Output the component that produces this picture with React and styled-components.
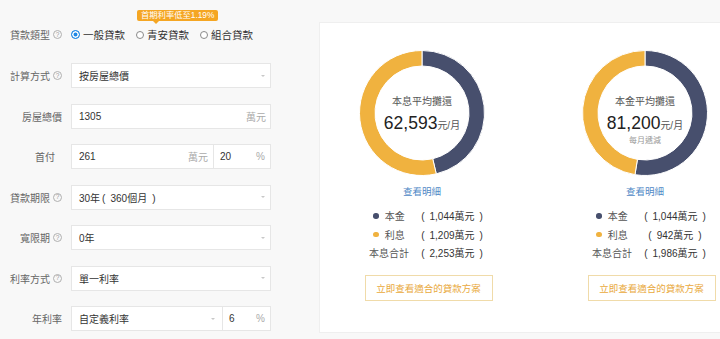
import React from "react";
import styled, { createGlobalStyle } from "styled-components";

const NAVY = "#474f6d";
const GOLD = "#f0b23f";

const GlobalStyle = createGlobalStyle`
  html, body { margin: 0; padding: 0; background: #f8f8f8; }
  body {
    width: 720px; height: 339px; overflow: hidden;
    font-family: "Liberation Sans", "Noto Sans CJK TC", sans-serif;
    color: #333;
  }
  * { box-sizing: border-box; }
`;

const Page = styled.div`
  display: flex;
  align-items: flex-start;
  gap: 48px;
`;

const Form = styled.div`
  width: 271px;
  flex-shrink: 0;
  padding-top: 21.8px;
  display: flex;
  flex-direction: column;
  gap: 15.5px;
`;

const Row = styled.div`
  display: grid;
  grid-template-columns: 62px 200px;
  column-gap: 9px;
  align-items: center;
  height: ${(p) => p.$h || 25}px;
`;

const Label = styled.div`
  display: flex;
  justify-content: flex-end;
  align-items: center;
  gap: 3px;
  font-size: 10px;
  color: #666;
  white-space: nowrap;
  padding-right: ${(p) => p.$pr || 0}px;
`;

const Help = styled.span`
  width: 9px;
  height: 9px;
  border: 1px solid #b0b0b0;
  border-radius: 50%;
  font-size: 6.5px;
  color: #999;
  display: inline-flex;
  align-items: center;
  justify-content: center;
  line-height: 1;
`;

const RadioRow = styled.div`
  display: flex;
  align-items: center;
  gap: 11px;
  height: 26px;
`;

const Option = styled.label`
  position: relative;
  display: inline-flex;
  align-items: center;
  gap: 3px;
  height: 26px;
  font-size: 10.5px;
  color: #333;
`;

const RadioMark = styled.span`
  width: ${(p) => (p.$on ? 9 : 8)}px;
  height: ${(p) => (p.$on ? 9 : 8)}px;
  border-radius: 50%;
  border: 1px solid ${(p) => (p.$on ? "#1e88e5" : "#8a8a8a")};
  background: ${(p) => (p.$on ? "#1e88e5" : "#fff")};
  box-shadow: ${(p) => (p.$on ? "inset 0 0 0 1.5px #fff" : "none")};
`;

const Tip = styled.span`
  position: absolute;
  top: -12px;
  left: 1px;
  background: #f5a623;
  color: #fff;
  font-size: 8.3px;
  line-height: 11px;
  padding: 0 4px;
  border-radius: 2px;
  white-space: nowrap;
  &::after {
    content: "";
    position: absolute;
    left: 16px;
    top: 100%;
    border: 3px solid transparent;
    border-top-color: #f5a623;
  }
`;

const Field = styled.div`
  display: flex;
  height: 25px;
  background: #fff;
  border: 1px solid #e6e6e6;
  font-size: 10px;
  color: #333;
`;

const Segment = styled.div`
  flex: ${(p) => (p.$w ? `0 0 ${p.$w}px` : "1 1 0")};
  display: flex;
  align-items: center;
  padding: 0 ${(p) => p.$pr ?? 4}px 0 ${(p) => p.$pl ?? 7}px;
  & + & { border-left: 1px solid #e6e6e6; }
`;

const Value = styled.span`
  flex: 1;
  white-space: pre;
`;

const Unit = styled.span`
  color: #aaa;
`;

const Caret = styled.span`
  width: 0;
  height: 0;
  margin-right: 1px;
  border-left: 2px solid transparent;
  border-right: 2px solid transparent;
  border-top: 2px solid #c8c8c8;
`;

const Card = styled.div`
  margin-top: 22px;
  height: 311px;
  width: 440px;
  flex-shrink: 0;
  background: #fff;
  border: 1px solid #efefef;
  display: flex;
  gap: 19px;
`;

const Column = styled.div`
  width: 204px;
  flex-shrink: 0;
  padding-top: 27px;
  display: flex;
  flex-direction: column;
  align-items: center;
`;

const Donut = styled.div`
  position: relative;
  width: 126px;
  height: 126px;
`;

const CenterText = styled.div`
  position: absolute;
  left: 0;
  right: 0;
  top: 45px;
  display: flex;
  flex-direction: column;
  align-items: center;
`;

const CenterTitle = styled.div`
  font-size: 10px;
  line-height: 14px;
  color: #555;
`;

const Amount = styled.div`
  margin-top: 4px;
  font-size: 17.5px;
  line-height: 20px;
  color: #222;
  white-space: nowrap;
`;

const AmountUnit = styled.span`
  font-size: 10px;
  color: #555;
`;

const Sub = styled.div`
  font-size: 8px;
  line-height: 10px;
  color: #999;
`;

const Link = styled.a`
  margin-top: 9px;
  font-size: 9.5px;
  line-height: 14px;
  color: #4f88c6;
  text-decoration: none;
`;

const Legend = styled.div`
  margin-top: 7.5px;
  display: grid;
  grid-template-columns: 60px 66px;
  grid-auto-rows: 18.5px;
  align-items: center;
  font-size: 10px;
`;

const LegendName = styled.div`
  display: flex;
  justify-content: center;
  align-items: center;
  gap: 6px;
  color: #555;
  white-space: nowrap;
`;

const LegendDot = styled.span`
  width: 5.5px;
  height: 5.5px;
  border-radius: 50%;
  background: ${(p) => p.$c};
`;

const LegendValue = styled.div`
  text-align: center;
  color: #333;
  white-space: pre;
`;

const CtaButton = styled.button`
  margin-top: 13.3px;
  margin-left: 13px;
  width: 128px;
  height: 26px;
  background: #fff;
  border: 1px solid #f0dba9;
  color: #e9a93c;
  font-family: inherit;
  font-size: 9.5px;
  padding: 0;
  cursor: pointer;
`;

function pt(cx, cy, r, a) {
  const rad = (a * Math.PI) / 180;
  return [cx + r * Math.sin(rad), cy - r * Math.cos(rad)];
}

function sector(cx, cy, r0, r1, a0, a1) {
  const large = a1 - a0 > 180 ? 1 : 0;
  const [x1, y1] = pt(cx, cy, r1, a0);
  const [x2, y2] = pt(cx, cy, r1, a1);
  const [x3, y3] = pt(cx, cy, r0, a1);
  const [x4, y4] = pt(cx, cy, r0, a0);
  return `M${x1} ${y1} A${r1} ${r1} 0 ${large} 1 ${x2} ${y2} L${x3} ${y3} A${r0} ${r0} 0 ${large} 0 ${x4} ${y4} Z`;
}

function Ring({ principal, interest }) {
  const split = (principal / (principal + interest)) * 360;
  return (
    <svg width="126" height="126" viewBox="0 0 126 126">
      <path d={sector(63, 63, 47, 62.5, 0, split)} fill={NAVY} stroke="#fff" strokeWidth="1" />
      <path d={sector(63, 63, 47, 62.5, split, 360)} fill={GOLD} stroke="#fff" strokeWidth="1" />
    </svg>
  );
}

const paren = (s) => `(\u2002${s}\u2002)`;

function Result({ title, amount, sub, principal, interest, total }) {
  return (
    <Column>
      <Donut>
        <Ring principal={principal} interest={interest} />
        <CenterText>
          <CenterTitle>{title}</CenterTitle>
          <Amount>
            {amount}
            <AmountUnit>元/月</AmountUnit>
          </Amount>
          {sub && <Sub>{sub}</Sub>}
        </CenterText>
      </Donut>
      <Link href="#">查看明細</Link>
      <Legend>
        <LegendName>
          <LegendDot $c={NAVY} />
          本金
        </LegendName>
        <LegendValue>{paren(`${principal.toLocaleString("en-US")}萬元`)}</LegendValue>
        <LegendName>
          <LegendDot $c={GOLD} />
          利息
        </LegendName>
        <LegendValue>{paren(`${interest.toLocaleString("en-US")}萬元`)}</LegendValue>
        <LegendName>本息合計</LegendName>
        <LegendValue>{paren(`${total}萬元`)}</LegendValue>
      </Legend>
      <CtaButton>立即查看適合的貸款方案</CtaButton>
    </Column>
  );
}

function SelectField({ children }) {
  return (
    <Field>
      <Segment $pr={4}>
        <Value>{children}</Value>
        <Caret />
      </Segment>
    </Field>
  );
}

export default function App() {
  return (
    <>
      <GlobalStyle />
      <Page>
        <Form>
          <Row $h={26}>
            <Label>
              貸款類型<Help>?</Help>
            </Label>
            <RadioRow>
              <Option>
                <RadioMark $on />
                一般貸款
              </Option>
              <Option>
                <Tip>首期利率低至1.19%</Tip>
                <RadioMark />
                青安貸款
              </Option>
              <Option>
                <RadioMark />
                組合貸款
              </Option>
            </RadioRow>
          </Row>
          <Row>
            <Label>
              計算方式<Help>?</Help>
            </Label>
            <SelectField>按房屋總價</SelectField>
          </Row>
          <Row>
            <Label>房屋總價</Label>
            <Field>
              <Segment>
                <Value>1305</Value>
                <Unit>萬元</Unit>
              </Segment>
            </Field>
          </Row>
          <Row>
            <Label $pr={7}>首付</Label>
            <Field>
              <Segment $pr={5}>
                <Value>261</Value>
                <Unit>萬元</Unit>
              </Segment>
              <Segment $w={57} $pl={6} $pr={5}>
                <Value>20</Value>
                <Unit>%</Unit>
              </Segment>
            </Field>
          </Row>
          <Row>
            <Label>
              貸款期限<Help>?</Help>
            </Label>
            <SelectField>{"30年\u2009(\u2002360個月\u2002)"}</SelectField>
          </Row>
          <Row>
            <Label>
              寬限期<Help>?</Help>
            </Label>
            <SelectField>0年</SelectField>
          </Row>
          <Row>
            <Label>
              利率方式<Help>?</Help>
            </Label>
            <SelectField>單一利率</SelectField>
          </Row>
          <Row>
            <Label>年利率</Label>
            <Field>
              <Segment $pr={6}>
                <Value>自定義利率</Value>
                <Caret />
              </Segment>
              <Segment $w={48} $pl={6} $pr={5}>
                <Value>6</Value>
                <Unit>%</Unit>
              </Segment>
            </Field>
          </Row>
        </Form>
        <Card>
          <Result
            title="本息平均攤還"
            amount="62,593"
            principal={1044}
            interest={1209}
            total="2,253"
          />
          <Result
            title="本金平均攤還"
            amount="81,200"
            sub="每月遞減"
            principal={1044}
            interest={942}
            total="1,986"
          />
        </Card>
      </Page>
    </>
  );
}
